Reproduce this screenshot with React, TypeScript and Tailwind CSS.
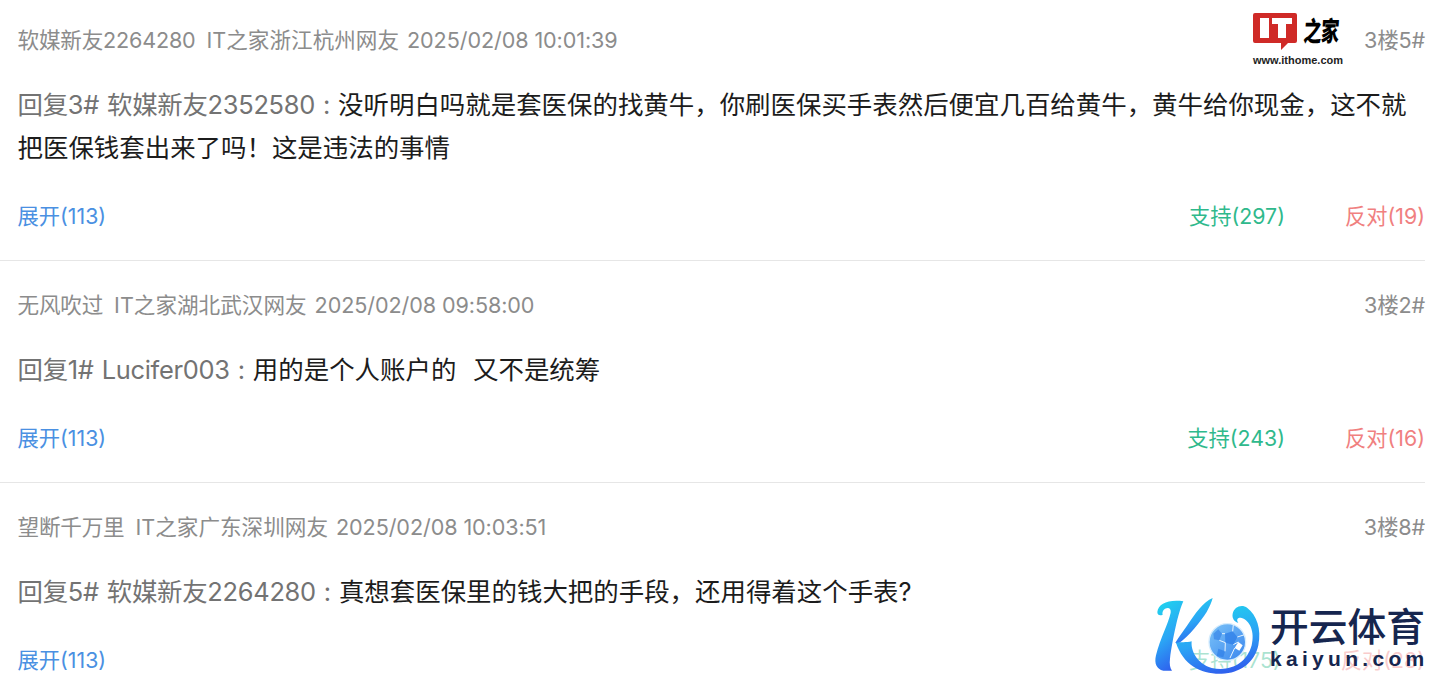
const comments = [
  {
    user: "软媒新友2264280",
    from: "IT之家浙江杭州网友",
    time: "2025/02/08 10:01:39",
    floor: "3楼5#",
    reply: "回复3# 软媒新友2352580 : ",
    text: "没听明白吗就是套医保的找黄牛，你刷医保买手表然后便宜几百给黄牛，黄牛给你现金，这不就把医保钱套出来了吗！这是违法的事情",
    up: 297,
    down: 19,
  },
  {
    user: "无风吹过",
    from: "IT之家湖北武汉网友",
    time: "2025/02/08 09:58:00",
    floor: "3楼2#",
    reply: "回复1# Lucifer003 : ",
    text: "用的是个人账户的  又不是统筹",
    up: 243,
    down: 16,
  },
  {
    user: "望断千万里",
    from: "IT之家广东深圳网友",
    time: "2025/02/08 10:03:51",
    floor: "3楼8#",
    reply: "回复5# 软媒新友2264280 : ",
    text: "真想套医保里的钱大把的手段，还用得着这个手表?",
    up: 175,
    down: 28,
  },
];

function IthomeMark() {
  return (
    <div className="absolute left-[1253px] top-[13px] flex w-[90px] flex-col items-center">
      <div className="flex h-[37px] items-start gap-[8px] self-start">
        <svg width="44" height="37" viewBox="0 0 44 37">
          <path d="M2 0H42a2 2 0 0 1 2 2V28a2 2 0 0 1-2 2H35L28 37V30H2a2 2 0 0 1-2-2V2a2 2 0 0 1 2-2Z" fill="#cf2a27" />
          <rect x="7" y="5" width="9" height="20" fill="#fff" />
          <path d="M19 5H39V11H33V25H25V11H19Z" fill="#fff" />
        </svg>
        <span className="mt-[1px] origin-top -skew-x-6 scale-y-150 whitespace-nowrap font-['Noto_Sans_CJK_SC',serif] text-[18px] leading-[20px] font-black tracking-[-0.5px] text-black">
          之家
        </span>
      </div>
      <span className="mt-[4px] font-['Liberation_Sans',sans-serif] text-[11px] leading-[12px] font-bold whitespace-nowrap text-[#222]">
        www.ithome.com
      </span>
    </div>
  );
}

function KaiyunMark() {
  return (
    <div className="absolute left-[1150px] top-[592px] flex items-start bg-white/60">
      <svg width="115" height="88" viewBox="0 0 345 264">
        <defs>
          <linearGradient id="kBlue" x1="0.2" y1="0" x2="0.5" y2="1">
            <stop offset="0" stopColor="#20d4ee" />
            <stop offset="0.55" stopColor="#2ba4f5" />
            <stop offset="1" stopColor="#2f62ee" />
          </linearGradient>
          <linearGradient id="ballBlue" x1="0" y1="0" x2="1" y2="1">
            <stop offset="0" stopColor="#7cc4f8" />
            <stop offset="1" stopColor="#3a86ee" />
          </linearGradient>
        </defs>
        <path
          d="M22 60C25 35 55 22 100 28C85 60 68 140 60 200C58 215 60 228 66 236H40C20 232 12 215 18 190C30 140 55 95 62 62C64 48 55 45 45 50C38 55 36 62 38 68C30 72 22 70 22 60Z"
          fill="url(#kBlue)"
        />
        <path
          d="M188 18C160 30 135 65 112 100C100 118 88 132 76 152L84 156C120 130 150 90 170 60C178 45 185 30 188 18Z"
          fill="url(#kBlue)"
        />
        <path
          d="M78 152C90 150 110 152 125 148C122 175 140 215 185 228C240 240 290 215 305 160C315 120 300 85 275 78C262 75 258 85 265 92C255 90 245 80 248 65C252 45 275 35 292 48C320 70 335 110 325 160C315 210 270 245 215 245C155 247 100 220 78 152Z"
          fill="url(#kBlue)"
        />
        <circle cx="232" cy="150" r="55" fill="url(#ballBlue)" stroke="#d5ecfd" strokeWidth="4" />
        <path d="M225 125L248 118L262 135L250 158L226 152Z" fill="#2f7fe8" opacity="0.75" />
        <path d="M190 125L205 112L216 125L208 145L192 142Z" fill="#2f7fe8" opacity="0.6" />
        <path d="M265 150L278 160L268 176L254 168Z" fill="#fff" />
        <path d="M205 170L225 178L220 196L200 192Z" fill="#2f7fe8" opacity="0.7" />
        <path d="M226 152L208 145M250 158L265 150M226 152L225 178M216 125L225 125M248 118L250 98M262 135L284 128M254 168L240 198" stroke="#eaf5fe" strokeWidth="3" fill="none" />
      </svg>
      <div className="ml-[5px] flex flex-col font-['Noto_Sans_CJK_SC',sans-serif]">
        <span className="mt-[8px] text-[38.75px] leading-[48px] font-medium whitespace-nowrap text-[#16264f]">
          开云体育
        </span>
        <span className="-mt-[1px] font-['Liberation_Sans',sans-serif] text-[21px] leading-[24px] font-bold tracking-[4.3px] whitespace-nowrap text-[#16264f]">
          kaiyun.com
        </span>
      </div>
    </div>
  );
}

export default function App() {
  return (
    <div className="relative h-[695px] overflow-hidden bg-white font-['Inter','Noto_Sans_CJK_SC',sans-serif]">
      <div className="-mt-[4px]">
        {comments.map((c) => (
          <div key={c.floor} className="mr-[15px] border-b border-[#e6e6e6] pt-[29px] pb-[28px] pl-[17.5px] last:border-b-0">
            <div className="flex h-[30px] items-center justify-between text-[21.6px] text-[#8c8c8c]">
              <div className="flex gap-[11px] whitespace-nowrap">
                <span className="tracking-[-0.2px]">{c.user}</span>
                <span>{c.from}</span>
                <span className="-ml-[3px] tracking-[-0.1px]">{c.time}</span>
              </div>
              <span className="tracking-[-0.2px]">{c.floor}</span>
            </div>
            <p className="mt-[28px] pr-[16px] text-[25.45px] leading-[43px] [word-spacing:1.2px] whitespace-pre-wrap text-[#1c1c1c]">
              <span className="tracking-[-0.3px] text-[#737373]">{c.reply}</span>
              {c.text}
            </p>
            <div className="mt-[33px] flex h-[30px] items-center text-[21.3px]">
              <span className="text-[#4a90e2]">展开(113)</span>
              <span className="ml-auto text-[#2fb98c]">支持({c.up})</span>
              <span className="ml-[60px] text-[#f08080]">反对({c.down})</span>
            </div>
          </div>
        ))}
      </div>
      <IthomeMark />
      <KaiyunMark />
    </div>
  );
}
